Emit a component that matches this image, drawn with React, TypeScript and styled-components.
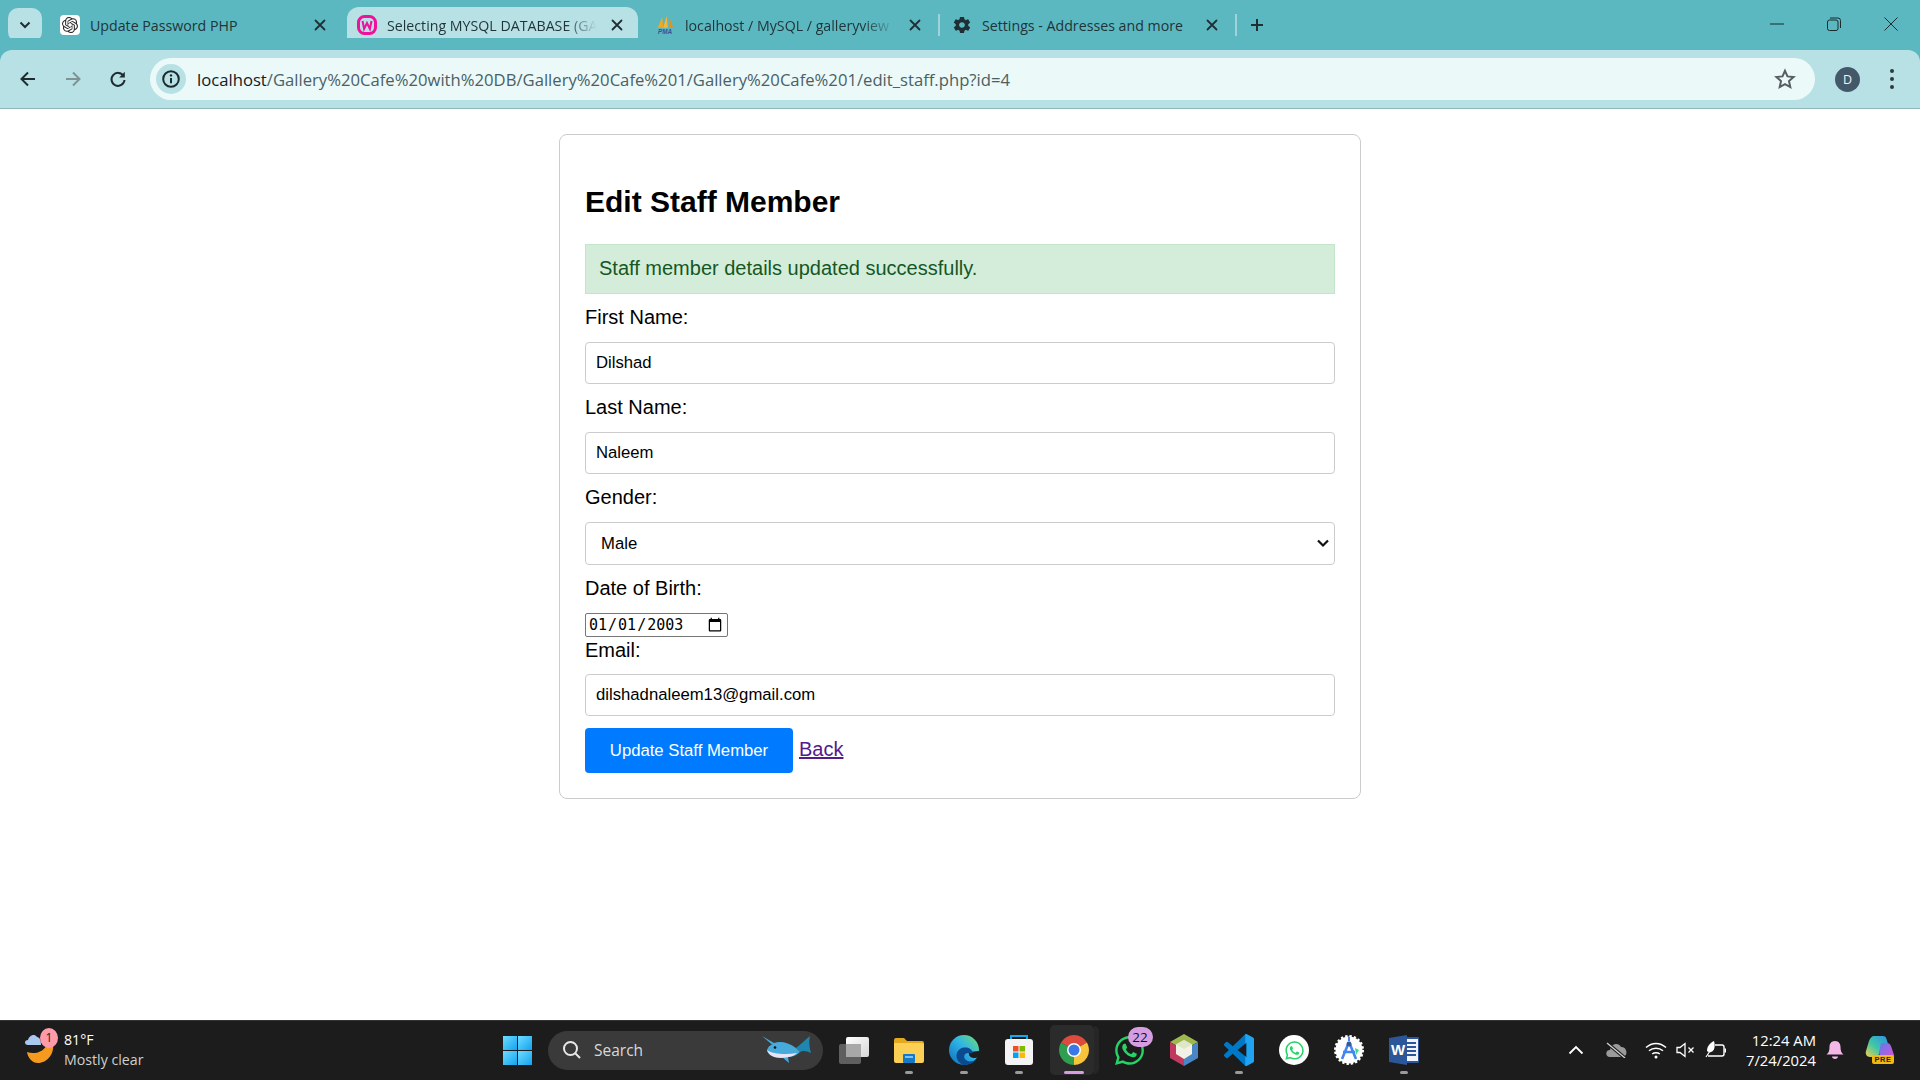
import React from 'react'
import styled, { createGlobalStyle } from 'styled-components'
import { SiOpenai } from 'react-icons/si'
import { IoMdSettings } from 'react-icons/io'
import { FaWhatsapp } from 'react-icons/fa'

const UI_FONT = '"Open Sans", "Noto Sans", sans-serif'
const PAGE_FONT = '"Liberation Sans", Arial, sans-serif'

const GlobalStyle = createGlobalStyle`
  * { box-sizing: border-box; }
  html, body { margin: 0; padding: 0; background: #fff; }
`

const Screen = styled.div`
  width: 1920px;
  height: 1080px;
  display: flex;
  flex-direction: column;
  overflow: hidden;
  background: #fff;
`

/* ---------- browser chrome ---------- */
const TabStrip = styled.div`
  height: 50px;
  flex: none;
  background: #5bb8c1;
  display: flex;
  align-items: flex-end;
  padding-left: 8px;
  font-family: ${UI_FONT};
`
const TabSearch = styled.div`
  width: 34px;
  height: 34px;
  align-self: flex-start;
  margin: 8px 8px 0 0;
  border-radius: 10px;
  background: #b8e1e6;
  display: flex;
  align-items: center;
  justify-content: center;
`
const Tab = styled.div<{ $active?: boolean }>`
  position: relative;
  width: 291px;
  height: 43px;
  padding: 0 11px 7px 10px;
  display: flex;
  align-items: center;
  gap: 10px;
  border-radius: 12px 12px 0 0;
  background: ${p => (p.$active ? '#b8e1e6' : 'transparent')};
  ${p =>
    p.$active &&
    `
    &::before, &::after {
      content: '';
      position: absolute;
      bottom: 0;
      width: 10px;
      height: 10px;
    }
    &::before { left: -10px; background: radial-gradient(circle at 0 0, transparent 10px, #b8e1e6 10.5px); }
    &::after { right: -10px; background: radial-gradient(circle at 100% 0, transparent 10px, #b8e1e6 10.5px); }
  `}
`
const Favicon = styled.span`
  width: 20px;
  height: 20px;
  flex: none;
  display: flex;
  align-items: center;
  justify-content: center;
`
const ChatFavicon = styled(Favicon)`
  background: #fff;
  border-radius: 4px;
  color: #2b2b2b;
`
const TabTitle = styled.span<{ $fade?: boolean }>`
  flex: 1;
  min-width: 0;
  font-size: 14.2px;
  color: #1f3438;
  white-space: nowrap;
  overflow: hidden;
  ${p =>
    p.$fade &&
    `
    mask-image: linear-gradient(90deg, #000 85%, transparent 100%);
  `}
`
const TabClose = styled.span`
  width: 20px;
  height: 20px;
  flex: none;
  display: flex;
  align-items: center;
  justify-content: center;
`
const TabGap = styled.div<{ $line?: boolean; $wide?: boolean }>`
  width: ${p => (p.$wide ? '7px' : '6px')};
  height: 22px;
  flex: none;
  margin-bottom: 14px;
  display: flex;
  justify-content: center;
  &::before {
    content: '';
    width: 2px;
    background: ${p => (p.$line ? '#9fd3d9' : 'transparent')};
  }
`
const NewTab = styled.div`
  width: 28px;
  height: 28px;
  margin: 0 0 11px 4px;
  display: flex;
  align-items: center;
  justify-content: center;
`
const WindowControls = styled.div`
  margin-left: auto;
  padding-right: 1px;
  align-self: flex-start;
  display: flex;
  height: 48px;
`
const WindowButton = styled.div`
  width: 57px;
  display: flex;
  align-items: center;
  justify-content: center;
`

const Toolbar = styled.div`
  height: 59px;
  flex: none;
  padding: 8px 18px 8px 10px;
  background: #b8e1e6;
  border-radius: 12px 12px 0 0;
  border-bottom: 1px solid #8fb7bc;
  display: flex;
  align-items: center;
  gap: 9px;
  position: relative;
  box-shadow: 0 -12px 0 #5bb8c1;
`
const NavButton = styled.div`
  width: 36px;
  height: 36px;
  flex: none;
  display: flex;
  align-items: center;
  justify-content: center;
`
const Omnibox = styled.div`
  flex: 1;
  height: 42px;
  margin-left: 5px;
  padding: 0 19px 0 6px;
  border-radius: 21px;
  background: #ecf9f9;
  display: flex;
  align-items: center;
  gap: 11px;
`
const InfoChip = styled.div`
  width: 30px;
  height: 30px;
  flex: none;
  border-radius: 50%;
  background: #b8e1e6;
  display: flex;
  align-items: center;
  justify-content: center;
`
const Url = styled.div`
  flex: 1;
  font-family: ${UI_FONT};
  font-size: 16.67px;
  color: #4a6064;
  white-space: nowrap;
`
const UrlHost = styled.span`
  color: #12201f;
`
const Avatar = styled.div`
  width: 25px;
  height: 25px;
  margin-left: 11px;
  flex: none;
  border-radius: 50%;
  background: #43596a;
  color: #f2f2f2;
  font-family: ${UI_FONT};
  font-size: 12.5px;
  display: flex;
  align-items: center;
  justify-content: center;
`
const MenuDots = styled.div`
  width: 20px;
  margin-left: 13px;
  flex: none;
  display: flex;
  flex-direction: column;
  align-items: center;
  gap: 4px;
  span {
    width: 4px;
    height: 4px;
    border-radius: 50%;
    background: #2b3a3d;
  }
`

/* ---------- page content ---------- */
const Main = styled.main`
  flex: 1;
  min-height: 0;
  padding-top: 25px;
  font-family: ${PAGE_FONT};
  font-size: 20px;
  color: #000;
`
const Card = styled.div`
  width: 802px;
  height: 665px;
  margin: 0 auto;
  padding: 25px;
  border: 1px solid #ccc;
  border-radius: 8px;
  background: #fff;
`
const Heading = styled.h2`
  margin: 24px 0 25px;
  font-size: 30px;
  line-height: 35px;
  font-weight: 700;
`
const Alert = styled.div`
  height: 50px;
  margin-bottom: 10px;
  padding: 11px 13px;
  line-height: 24px;
  background: #d4edda;
  border: 1px solid #c3e6cb;
  color: #155724;
`
const FieldLabel = styled.label`
  display: block;
  height: 25px;
  padding-top: 2px;
  line-height: 23px;
  margin-bottom: 13px;
`
const EmailLabel = styled(FieldLabel)`
  margin-bottom: 12px;
`
const TextInput = styled.input`
  display: block;
  width: 100%;
  height: 42px;
  margin-bottom: 10px;
  padding: 0 10px;
  border: 1px solid #ccc;
  border-radius: 4px;
  background: #fff;
  font-family: ${PAGE_FONT};
  font-size: 16.7px;
  color: #000;
`
const SelectWrap = styled.div`
  position: relative;
  height: 43px;
  margin-bottom: 10px;
`
const GenderSelect = styled.select`
  display: block;
  width: 100%;
  height: 100%;
  padding: 0 15px;
  appearance: none;
  border: 1px solid #ccc;
  border-radius: 4px;
  background: #fff;
  font-family: ${PAGE_FONT};
  font-size: 16.7px;
  color: #000;
`
const SelectArrow = styled.svg`
  position: absolute;
  right: 6px;
  top: 17px;
  pointer-events: none;
`
const DateInput = styled.input`
  display: block;
  width: 143px;
  height: 24px;
  padding: 1px 2px;
  border: 1px solid #767676;
  border-radius: 2px;
  background: #fff;
  font-family: "DejaVu Sans Mono", monospace;
  font-size: 15px;
  color: #000;
  &::-webkit-calendar-picker-indicator {
    width: 16px;
    height: 16px;
    margin: 0 2px 0 0;
    padding: 0;
  }
`
const Actions = styled.div`
  margin-top: 12px;
  display: flex;
  align-items: flex-start;
  gap: 6px;
`
const SubmitButton = styled.button`
  width: 208px;
  height: 45px;
  border: 0;
  border-radius: 4px;
  background: #007bff;
  color: #fff;
  font-family: ${PAGE_FONT};
  font-size: 16.7px;
`
const BackLink = styled.a`
  margin-top: 10px;
  color: #551a8b;
  line-height: 23px;
  text-decoration: underline;
`

/* ---------- taskbar ---------- */
const Taskbar = styled.footer`
  height: 60px;
  flex: none;
  padding-bottom: 1px;
  background: #1c1c1c;
  border-top: 1px solid #333;
  display: flex;
  align-items: center;
  font-family: ${UI_FONT};
  color: #fff;
`
const Widgets = styled.div`
  width: 503px;
  flex: none;
  padding-left: 24px;
  display: flex;
  align-items: center;
  gap: 8px;
`
const WeatherIcon = styled.div`
  position: relative;
  width: 32px;
  height: 40px;
  flex: none;
`
const WeatherBadge = styled.span`
  position: absolute;
  top: -2px;
  left: 16px;
  width: 18px;
  height: 20px;
  border-radius: 50%;
  background: #ff9aa8;
  color: #222;
  font-size: 12px;
  line-height: 20px;
  text-align: center;
`
const WeatherText = styled.div`
  font-size: 14.2px;
  line-height: 20px;
`
const WeatherSub = styled.div`
  color: #cfcfcf;
`
const StartButton = styled.div`
  width: 29px;
  height: 29px;
  flex: none;
  margin-right: 16px;
  display: grid;
  grid-template-columns: 1fr 1fr;
  gap: 1px;
  span {
    background: linear-gradient(135deg, #6fdcff, #12a3f0);
  }
`
const SearchPill = styled.div`
  width: 275px;
  height: 39px;
  flex: none;
  padding: 0 11px 0 14px;
  border-radius: 20px;
  background: #3a3a3a;
  display: flex;
  align-items: center;
  gap: 12px;
  font-size: 15.5px;
  color: #d8d8d8;
`
const SearchLabel = styled.span`
  flex: 1;
`
const TaskView = styled.div`
  width: 42.5px;
  margin-left: 16px;
  flex: none;
  display: flex;
  align-items: center;
`
const TaskSlot = styled.div<{ $active?: boolean }>`
  position: relative;
  width: 55px;
  height: 50px;
  flex: none;
  display: flex;
  align-items: center;
  justify-content: center;
  ${p =>
    p.$active &&
    `
    &::before {
      content: '';
      position: absolute;
      inset: 0 8px 0 3px;
      border-radius: 5px;
      background: #2b2b2b;
    }
    &::after {
      content: '';
      position: absolute;
      right: 3px;
      top: 1px;
      bottom: 1px;
      width: 5px;
      border-radius: 0 5px 5px 0;
      background: #262626;
    }
  `}
  svg {
    position: relative;
    z-index: 1;
  }
`
const Indicator = styled.span<{ $active?: boolean }>`
  position: absolute;
  bottom: 1px;
  left: 50%;
  z-index: 1;
  width: ${p => (p.$active ? '20px' : '8px')};
  height: 3px;
  margin-left: ${p => (p.$active ? '-10px' : '-4px')};
  border-radius: 2px;
  background: ${p => (p.$active ? '#d69ee0' : '#9a9a9a')};
`
const CountBadge = styled.span`
  position: absolute;
  top: 2px;
  right: 4px;
  z-index: 2;
  width: 25px;
  height: 20px;
  border-radius: 10px;
  background: #d69ee0;
  color: #111;
  font-size: 13.5px;
  line-height: 20px;
  text-align: center;
`
const Tray = styled.div`
  margin-left: auto;
  padding-right: 14px;
  display: flex;
  align-items: center;
`
const TraySlot = styled.div<{ $w: number }>`
  width: ${p => p.$w}px;
  flex: none;
  display: flex;
  align-items: center;
  justify-content: center;
`
const Clock = styled.div`
  width: 80px;
  flex: none;
  text-align: right;
  font-size: 14.8px;
  line-height: 20px;
  white-space: nowrap;
`

/* ---------- drawn icons ---------- */
const CloseGlyph = () => (
  <svg width="12" height="12" viewBox="0 0 12 12">
    <path d="M1.5 1.5l9 9M10.5 1.5l-9 9" stroke="#1f2f33" strokeWidth="1.8" strokeLinecap="round" />
  </svg>
)
const WampIcon = () => (
  <svg width="20" height="20" viewBox="0 0 20 20">
    <rect x="1.5" y="1.5" width="17" height="17" rx="6" fill="none" stroke="#f0119a" strokeWidth="3" />
    <path d="M5.5 6l1.6 8 2.900-6 2.900 6 1.600-8" fill="none" stroke="#f0119a" strokeWidth="2" />
  </svg>
)
const PmaIcon = () => (
  <svg width="22" height="20" viewBox="0 0 22 20">
    <path d="M3 13L8 1l1 12z" fill="#f5a623" />
    <path d="M9 13l4-13 1 13z" fill="#f7b733" />
    <path d="M15 13l2-9 3 9z" fill="#e8901a" />
    <text x="11" y="19.5" textAnchor="middle" fontFamily="Liberation Sans" fontStyle="italic" fontWeight="700" fontSize="7" fill="#3b4f9a">
      PMA
    </text>
  </svg>
)
const ArrowIcon = ({ left, color }: { left?: boolean; color: string }) => (
  <svg width="18" height="18" viewBox="0 0 18 18">
    <path
      d={left ? 'M16 9H3M9 2.5L2.5 9 9 15.5' : 'M2 9h13M9 2.5L15.5 9 9 15.5'}
      fill="none"
      stroke={color}
      strokeWidth="2"
    />
  </svg>
)
const ReloadIcon = () => (
  <svg width="18" height="18" viewBox="0 0 18 18">
    <path d="M14.6 6a6.5 6.5 0 1 0 .9 4" fill="none" stroke="#1e2c30" strokeWidth="2" />
    <path d="M15.8 1.8v5.6h-5.6z" fill="#1e2c30" />
  </svg>
)
const InfoIcon = () => (
  <svg width="20" height="20" viewBox="0 0 20 20">
    <circle cx="10" cy="10" r="7.8" fill="none" stroke="#1b2a2e" strokeWidth="2" />
    <path d="M10 9v5.2" stroke="#1b2a2e" strokeWidth="2" />
    <circle cx="10" cy="6.4" r="1.2" fill="#1b2a2e" />
  </svg>
)
const StarIcon = () => (
  <svg width="22" height="22" viewBox="0 0 22 22">
    <path
      d="M11 2.8l2.5 5.6 6.1.6-4.6 4.1 1.3 6L11 16.1l-5.3 3 1.3-6L2.4 9l6.1-.6z"
      fill="none"
      stroke="#555f63"
      strokeWidth="2"
    />
  </svg>
)
const ChevronDown = () => (
  <svg width="12" height="8" viewBox="0 0 12 8">
    <path d="M1.5 1.5L6 6l4.5-4.5" fill="none" stroke="#1f2f33" strokeWidth="2" />
  </svg>
)
const WeatherGlyph = () => (
  <svg width="32" height="40" viewBox="0 0 32 40">
    <path d="M3 22c8 3 18 0 21-10l5 0c2 12-6 21-15 21-6 0-10-5-11-11z" fill="#f59a1e" />
    <path d="M4 15c-4 0-4-5 0-5 1-4 6-7 9-3 3 0 4 4 4 8z" fill="#a9c8f0" />
  </svg>
)
const SearchGlyph = () => (
  <svg width="20" height="20" viewBox="0 0 20 20">
    <circle cx="8.500" cy="8.500" r="6.500" fill="none" stroke="#e8e8e8" strokeWidth="2" />
    <path d="M13 13l5 5" stroke="#e8e8e8" strokeWidth="2" />
  </svg>
)
const DolphinIcon = () => (
  <svg width="52" height="30" viewBox="0 0 52 30">
    <path d="M36 13c4-3 8-7 14-12-1 5-1 9 1 17-4-2-8-3-11-1z" fill="#1f86b0" />
    <path d="M2 1l12 7c6-2 14-1 22 5l4 4c-4 4-8 5-12 5l1 6-7-6c-7 1-14-1-15-7 1-3 3-5 5-5.500z" fill="#46aadb" />
    <path d="M7 15c5 4 19 5 30 3-3 3-7 4-11 4.500-8 1.500-17-.5-19-7.500z" fill="#e8e4f8" />
    <circle cx="15" cy="12.500" r="1.300" fill="#111" />
  </svg>
)
const TaskViewIcon = () => (
  <svg width="30" height="27" viewBox="0 0 30 27">
    <defs>
      <linearGradient id="taskFront" x1="0" y1="0" x2="1" y2="1">
        <stop offset="0" stopColor="#ffffff" />
        <stop offset="1" stopColor="#d6d6d6" />
      </linearGradient>
    </defs>
    <rect x="0" y="7" width="22" height="20" rx="2" fill="#5f5f5f" />
    <rect x="7" y="0" width="23" height="20" rx="2" fill="url(#taskFront)" />
    <rect x="7" y="7" width="15" height="13" fill="#a8a8a8" />
  </svg>
)
const FolderIcon = () => (
  <svg width="30" height="30" viewBox="0 0 30 30">
    <path d="M0 5a2 2 0 0 1 2-2h8l3 3h15a2 2 0 0 1 2 2v3H0z" fill="#e5a91f" />
    <path d="M0 8h28a2 2 0 0 1 2 2v16a2 2 0 0 1-2 2H2a2 2 0 0 1-2-2z" fill="#fcd054" />
    <rect x="9" y="19" width="12" height="9" rx="1" fill="#1479c9" />
    <rect x="11" y="21" width="8" height="2" fill="#7cc4f0" />
  </svg>
)
const EdgeIcon = () => (
  <svg width="30" height="30" viewBox="0 0 30 30">
    <defs>
      <linearGradient id="edgeA" x1="0" y1="1" x2="1" y2="0">
        <stop offset="0" stopColor="#0f6cbd" />
        <stop offset="0.55" stopColor="#2fb5e6" />
        <stop offset="1" stopColor="#74e06a" />
      </linearGradient>
    </defs>
    <circle cx="15" cy="15" r="15" fill="url(#edgeA)" />
    <path d="M31 16l-11 1c-1 4 2 6 6 6l5-1z" fill="#1c1c1c" />
    <path d="M14 30C7 27 5 18 11 14c5-3 12-1 13 4h-5c-3 0-5 3-3 6 2 3 6 3 11 1-3 3-7 5-13 5z" fill="#0b4a8f" />
  </svg>
)
const StoreIcon = () => (
  <svg width="30" height="32" viewBox="0 0 30 32">
    <path d="M7 6V2h16v4" fill="none" stroke="#19a6e8" strokeWidth="2" />
    <rect x="1" y="5" width="28" height="26" rx="3" fill="#f4f4f4" />
    <rect x="9" y="12" width="5.500" height="5.500" fill="#f25022" />
    <rect x="15.500" y="12" width="5.500" height="5.500" fill="#7fba00" />
    <rect x="9" y="18.500" width="5.500" height="5.500" fill="#00a4ef" />
    <rect x="15.500" y="18.500" width="5.500" height="5.500" fill="#ffb900" />
  </svg>
)
const ChromeIcon = () => (
  <svg width="30" height="30" viewBox="0 0 30 30">
    <path d="M15 15L2.010 7.500A15 15 0 0 1 27.990 7.500z" fill="#dd4a3e" />
    <path d="M15 15L27.990 7.500A15 15 0 0 1 15 30z" fill="#f7c43a" />
    <path d="M15 15L15 30A15 15 0 0 1 2.010 7.500z" fill="#2f9e4f" />
    <circle cx="15" cy="15" r="7" fill="#fff" />
    <circle cx="15" cy="15" r="5.500" fill="#3b78e7" />
  </svg>
)
const NetbeansIcon = () => (
  <svg width="28" height="32" viewBox="0 0 28 32">
    <path d="M14 0l14 8-14 8L0 8z" fill="#9db84f" />
    <path d="M0 8l14 8v16L0 24z" fill="#c2395f" />
    <path d="M28 8L14 16v16l14-8z" fill="#4a86c5" />
    <path d="M14 6l8 4.500V20l-8 5-8-5v-9.500z" fill="#f1f1e6" />
    <path d="M14 6l8 4.500-8 4.500-8-4.500z" fill="#dfe6c5" />
  </svg>
)
const VS_CODE_PATH =
  'M23.150 2.587L18.210.21a1.494 1.494 0 0 0-1.705.29l-9.460 8.630-4.120-3.128a.999.999 0 0 0-1.276.057L.327 7.261A1 1 0 0 0 .326 8.740L3.899 12 .326 15.260a1 1 0 0 0 .001 1.479L1.650 17.940a.999.999 0 0 0 1.276.057l4.120-3.128 9.460 8.630a1.492 1.492 0 0 0 1.704.29l4.942-2.377A1.500 1.500 0 0 0 24 20.060V3.939a1.500 1.500 0 0 0-.85-1.352zm-5.146 14.861L10.826 12l7.178-5.448v10.896z'
const VsCodeIcon = () => (
  <svg width="30" height="32" viewBox="0 0 24 24" preserveAspectRatio="none">
    <defs>
      <clipPath id="vsRight">
        <rect x="17" y="0" width="7" height="24" />
      </clipPath>
    </defs>
    <path d={VS_CODE_PATH} fill="#0078c8" />
    <path d={VS_CODE_PATH} fill="#20a3f0" clipPath="url(#vsRight)" />
  </svg>
)
const WhiteWhatsapp = styled.span`
  width: 30px;
  height: 30px;
  border-radius: 50%;
  background: #fff;
  display: flex;
  align-items: center;
  justify-content: center;
  color: #25d366;
  position: relative;
  z-index: 1;
`
const AndroidIcon = () => (
  <svg width="30" height="32" viewBox="0 0 30 32">
    <circle cx="15" cy="16" r="13.500" fill="#fff" />
    <circle cx="15" cy="16" r="14" fill="none" stroke="#fff" strokeWidth="2" strokeDasharray="2.400 2" />
    <path d="M21 14l4 2-3 5z" fill="#3ddc84" />
    <path d="M15 8l-7 17M15 8l7 17M9 18h12" fill="none" stroke="#4285f4" strokeWidth="2.600" />
    <circle cx="15" cy="10" r="2.500" fill="#3a5a90" />
    <path d="M15 3v4" stroke="#4285f4" strokeWidth="2" />
  </svg>
)
const WordIcon = () => (
  <svg width="32" height="30" viewBox="0 0 32 30">
    <rect x="16" y="2" width="15" height="26" rx="1" fill="#2b579a" />
    <rect x="17" y="4" width="13" height="22" fill="#f1f5fb" />
    <path d="M19 8h9M19 12h9M19 16h9M19 20h9" stroke="#2b579a" strokeWidth="1.800" />
    <path d="M1 3l18-3v30L1 27z" fill="#2b579a" />
    <text x="10" y="20" textAnchor="middle" fontFamily="Liberation Sans" fontWeight="700" fontSize="15" fill="#fff">
      W
    </text>
  </svg>
)
const TrayChevron = () => (
  <svg width="16" height="10" viewBox="0 0 16 10">
    <path d="M1.500 8.500L8 2l6.500 6.500" fill="none" stroke="#fff" strokeWidth="1.800" />
  </svg>
)
const CloudOff = () => (
  <svg width="22" height="16" viewBox="0 0 22 16">
    <path d="M5 15c-5 0-5-7 0-7 1-7 9-8 11-3 6-1 8 10 1 10z" fill="#9a9a9a" />
    <path d="M2 1l18 15" stroke="#1c1c1c" strokeWidth="3.500" />
    <path d="M2 1l18 15" stroke="#d0d0d0" strokeWidth="1.300" />
  </svg>
)
const WifiIcon = () => (
  <svg width="22" height="18" viewBox="0 0 22 18">
    <path d="M1 6.500c6-5.500 14-5.500 20 0M4 9.800c4-3.500 10-3.500 14 0M7.200 13c2-1.700 5.600-1.700 7.600 0" fill="none" stroke="#fff" strokeWidth="1.500" />
    <circle cx="11" cy="16" r="1.500" fill="#fff" />
  </svg>
)
const MuteIcon = () => (
  <svg width="20" height="16" viewBox="0 0 20 16">
    <path d="M1 5.500h3L9 1.500v13l-5-4H1z" fill="none" stroke="#fff" strokeWidth="1.300" />
    <path d="M12.500 5.500l5 5M17.500 5.500l-5 5" stroke="#fff" strokeWidth="1.300" />
  </svg>
)
const BatteryIcon = () => (
  <svg width="22" height="20" viewBox="0 0 22 20">
    <path d="M10 5h7a2 2 0 0 1 2 2v7a2 2 0 0 1-2 2H3" fill="none" stroke="#fff" strokeWidth="1.400" />
    <path d="M19.500 8.500h1.500v4h-1.500" fill="#fff" />
    <path d="M2 11c0-5 3-8 7-10 1.500 5 .5 10-3 11-2 .5-3 0-4-1z" fill="#fff" />
    <path d="M1 17l6-9" stroke="#fff" strokeWidth="1.200" />
  </svg>
)
const BellIcon = () => (
  <svg width="18" height="20" viewBox="0 0 18 20">
    <path d="M9 1c-4 0-5.500 3-5.500 6 0 4-1 6-3 7.500h17c-2-1.500-3-3.500-3-7.500 0-3-1.500-6-5.500-6z" fill="#f4b8e8" />
    <path d="M6 16.500h6c0 1.500-1.500 2.500-3 2.500s-3-1-3-2.500z" fill="#f4b8e8" />
  </svg>
)
const CopilotIcon = () => (
  <svg width="30" height="30" viewBox="0 0 30 30">
    <defs>
      <linearGradient id="copA" x1="0" y1="1" x2="1" y2="0">
        <stop offset="0" stopColor="#f5d14a" />
        <stop offset="0.45" stopColor="#3ec6a8" />
        <stop offset="1" stopColor="#2f8fe8" />
      </linearGradient>
      <linearGradient id="copB" x1="0" y1="0" x2="1" y2="1">
        <stop offset="0" stopColor="#5a7cf0" />
        <stop offset="1" stopColor="#e64fd0" />
      </linearGradient>
    </defs>
    <path d="M9 1h9c2 0 3 1 3.500 3L24 12h-8l-3 10H5c-3 0-5-3-4-6l3-10C5 3 7 1 9 1z" fill="url(#copA)" />
    <path d="M16 8h6c2 0 3 1 4 3l3 9c.5 3-1 5-4 5h-9l-2-7z" fill="url(#copB)" />
    <rect x="7" y="20" width="22" height="9" rx="2" fill="#f2b90f" />
    <text x="18" y="27" textAnchor="middle" fontFamily="Liberation Sans" fontWeight="700" fontSize="7.500" letterSpacing="0.500" fill="#222">
      PRE
    </text>
  </svg>
)

type TaskItem = { key: string; icon: React.ReactNode; open?: boolean; active?: boolean; count?: string }

const taskItems: TaskItem[] = [
  { key: 'files', icon: <FolderIcon />, open: true },
  { key: 'edge', icon: <EdgeIcon />, open: true },
  { key: 'store', icon: <StoreIcon />, open: true },
  { key: 'chrome', icon: <ChromeIcon />, open: true, active: true },
  { key: 'whatsapp', icon: <FaWhatsapp size={33} color="#25d366" />, count: '22' },
  { key: 'netbeans', icon: <NetbeansIcon /> },
  { key: 'vscode', icon: <VsCodeIcon />, open: true },
  { key: 'whatsapp2', icon: <WhiteWhatsapp><FaWhatsapp size={21} /></WhiteWhatsapp> },
  { key: 'android', icon: <AndroidIcon /> },
  { key: 'word', icon: <WordIcon />, open: true },
]

export default function App() {
  return (
    <Screen>
      <GlobalStyle />
      <TabStrip>
        <TabSearch>
          <ChevronDown />
        </TabSearch>
        <Tab>
          <ChatFavicon>
            <SiOpenai size={16} />
          </ChatFavicon>
          <TabTitle>Update Password PHP</TabTitle>
          <TabClose>
            <CloseGlyph />
          </TabClose>
        </Tab>
        <TabGap />
        <Tab $active>
          <Favicon>
            <WampIcon />
          </Favicon>
          <TabTitle $fade>Selecting MYSQL DATABASE (GA</TabTitle>
          <TabClose>
            <CloseGlyph />
          </TabClose>
        </Tab>
        <TabGap $wide />
        <Tab>
          <Favicon>
            <PmaIcon />
          </Favicon>
          <TabTitle $fade>localhost / MySQL / galleryview</TabTitle>
          <TabClose>
            <CloseGlyph />
          </TabClose>
        </Tab>
        <TabGap $line />
        <Tab>
          <Favicon>
            <IoMdSettings size={20} color="#1f2f33" />
          </Favicon>
          <TabTitle>Settings - Addresses and more</TabTitle>
          <TabClose>
            <CloseGlyph />
          </TabClose>
        </Tab>
        <TabGap $line />
        <NewTab>
          <svg width="16" height="16" viewBox="0 0 16 16">
            <path d="M8 2v12M2 8h12" stroke="#1f2f33" strokeWidth="2" />
          </svg>
        </NewTab>
        <WindowControls>
          <WindowButton>
            <svg width="14" height="2" viewBox="0 0 14 2">
              <path d="M0 1h14" stroke="#1b2b2f" strokeWidth="1" />
            </svg>
          </WindowButton>
          <WindowButton>
            <svg width="14" height="14" viewBox="0 0 14 14">
              <rect x="0.500" y="3" width="10.500" height="10.500" rx="2" fill="none" stroke="#1b2b2f" />
              <path d="M3 1h8a2.500 2.500 0 0 1 2.500 2.500V11" fill="none" stroke="#1b2b2f" />
            </svg>
          </WindowButton>
          <WindowButton>
            <svg width="14" height="14" viewBox="0 0 14 14">
              <path d="M.5.500l13 13M13.500.500l-13 13" stroke="#1b2b2f" strokeWidth="1" />
            </svg>
          </WindowButton>
        </WindowControls>
      </TabStrip>

      <Toolbar>
        <NavButton>
          <ArrowIcon left color="#1e2c30" />
        </NavButton>
        <NavButton>
          <ArrowIcon color="#7f9397" />
        </NavButton>
        <NavButton>
          <ReloadIcon />
        </NavButton>
        <Omnibox>
          <InfoChip>
            <InfoIcon />
          </InfoChip>
          <Url>
            <UrlHost>localhost</UrlHost>/Gallery%20Cafe%20with%20DB/Gallery%20Cafe%201/Gallery%20Cafe%201/edit_staff.php?id=4
          </Url>
          <StarIcon />
        </Omnibox>
        <Avatar>D</Avatar>
        <MenuDots>
          <span />
          <span />
          <span />
        </MenuDots>
      </Toolbar>

      <Main>
        <Card>
          <Heading>Edit Staff Member</Heading>
          <Alert>Staff member details updated successfully.</Alert>
          <FieldLabel>First Name:</FieldLabel>
          <TextInput type="text" defaultValue="Dilshad" />
          <FieldLabel>Last Name:</FieldLabel>
          <TextInput type="text" defaultValue="Naleem" />
          <FieldLabel>Gender:</FieldLabel>
          <SelectWrap>
            <GenderSelect defaultValue="Male">
              <option>Male</option>
              <option>Female</option>
            </GenderSelect>
            <SelectArrow width="12" height="9" viewBox="0 0 12 9">
              <path d="M1 1.500l5 5 5-5" fill="none" stroke="#111" strokeWidth="2.200" />
            </SelectArrow>
          </SelectWrap>
          <FieldLabel>Date of Birth:</FieldLabel>
          <DateInput type="date" defaultValue="2003-01-01" />
          <EmailLabel>Email:</EmailLabel>
          <TextInput type="email" defaultValue="dilshadnaleem13@gmail.com" />
          <Actions>
            <SubmitButton type="button">Update Staff Member</SubmitButton>
            <BackLink href="#">Back</BackLink>
          </Actions>
        </Card>
      </Main>

      <Taskbar>
        <Widgets>
          <WeatherIcon>
            <WeatherGlyph />
            <WeatherBadge>1</WeatherBadge>
          </WeatherIcon>
          <WeatherText>
            81°F
            <WeatherSub>Mostly clear</WeatherSub>
          </WeatherText>
        </Widgets>
        <StartButton>
          <span />
          <span />
          <span />
          <span />
        </StartButton>
        <SearchPill>
          <SearchGlyph />
          <SearchLabel>Search</SearchLabel>
          <DolphinIcon />
        </SearchPill>
        <TaskView>
          <TaskViewIcon />
        </TaskView>
        {taskItems.map(item => (
          <TaskSlot key={item.key} $active={item.active}>
            {item.icon}
            {item.count && <CountBadge>{item.count}</CountBadge>}
            {item.open && <Indicator $active={item.active} />}
          </TaskSlot>
        ))}
        <Tray>
          <TraySlot $w={40}>
            <TrayChevron />
          </TraySlot>
          <TraySlot $w={40}>
            <CloudOff />
          </TraySlot>
          <TraySlot $w={40}>
            <WifiIcon />
          </TraySlot>
          <TraySlot $w={20}>
            <MuteIcon />
          </TraySlot>
          <TraySlot $w={40}>
            <BatteryIcon />
          </TraySlot>
          <Clock>
            12:24 AM
            <br />
            7/24/2024
          </Clock>
          <TraySlot $w={38}>
            <BellIcon />
          </TraySlot>
          <TraySlot $w={52}>
            <CopilotIcon />
          </TraySlot>
        </Tray>
      </Taskbar>
    </Screen>
  )
}
